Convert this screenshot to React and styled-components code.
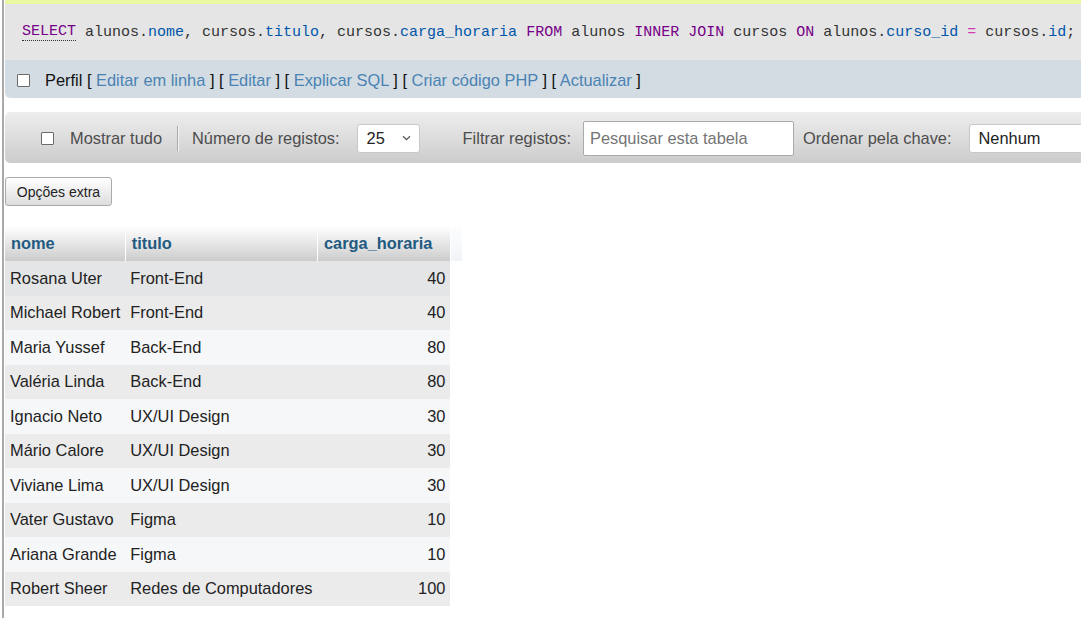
import React from "react"
import styled, { createGlobalStyle } from "styled-components"

const GlobalStyle = createGlobalStyle`
    html, body {
        margin: 0;
        padding: 0;
        background: #fff;
        overflow: hidden;
    }
    body {
        font-family: "Liberation Sans", Arial, sans-serif;
        color: #333;
    }
`

const Frame = styled.div`
    margin-left: 2px;
    border-left: 2px solid #a9a9a9;
    padding-left: 1px;
    min-height: 100vh;
`

const Content = styled.div`
    width: 1120px;
`

const SuccessEdge = styled.div`
    height: 4px;
    background: #ebf8a4;
`

const SqlBox = styled.div`
    height: 56px;
    background: #e5e5e5;
    display: flex;
    align-items: center;
    padding-left: 17px;
    font-family: "Liberation Mono", "DejaVu Sans Mono", monospace;
    font-size: 15px;
    color: #333;
    white-space: pre;
`

const Keyword = styled.span`
    color: #770088;
    border-bottom: ${p => (p.$doc ? "1px dotted #333" : "none")};
`

const Column = styled.span`
    color: #0055aa;
`

const Operator = styled.span`
    color: #d13bb4;
`

const ToolsBar = styled.div`
    height: 38px;
    background: #d3dce3;
    border-radius: 0 0 5px 5px;
    display: flex;
    align-items: center;
    padding-left: 12px;
    padding-top: 2px;
    box-sizing: border-box;
    font-size: 16.4px;
    color: #111;
`

const Checkbox = styled.span`
    display: inline-block;
    width: 11px;
    height: 11px;
    border: 1.5px solid #6b6b6b;
    border-radius: 1px;
    background: #fff;
    flex: none;
`

const ToolsText = styled.span`
    margin-left: 15px;
    white-space: pre;
`

const Link = styled.a`
    color: #4a83b3;
    text-decoration: none;
`

const NavBar = styled.div`
    margin-top: 14px;
    height: 51px;
    box-sizing: border-box;
    padding-top: 1px;
    border-radius: 5px;
    background: linear-gradient(#eeeeee, #cccccc);
    display: flex;
    align-items: center;
    padding-left: 36px;
    font-size: 16.4px;
    color: #4d4d4d;
`

const Label = styled.span`
    margin-left: ${p => p.$gap || 0}px;
    white-space: nowrap;
`

const Separator = styled.span`
    width: 1px;
    height: 25px;
    background: #a9a9a9;
    border-right: 1px solid #f4f4f4;
    margin-left: 15px;
`

const Select = styled.div`
    margin-left: ${p => p.$gap}px;
    width: ${p => p.$width}px;
    height: 29px;
    box-sizing: border-box;
    background: #fff;
    border: 1px solid #c8c8c8;
    border-radius: 3px;
    display: flex;
    align-items: center;
    justify-content: space-between;
    padding: 0 8px 0 9px;
    color: #222;
    flex: none;
`

const Input = styled.div`
    margin-left: 12px;
    width: 211px;
    height: 35px;
    box-sizing: border-box;
    background: #fff;
    border: 1px solid #aaa;
    border-radius: 2px;
    display: flex;
    align-items: center;
    padding-left: 6px;
    color: #757575;
    flex: none;
`

const ExtraButton = styled.button`
    margin-top: 14px;
    height: 29px;
    width: 107px;
    padding: 0;
    font-family: "Liberation Sans", Arial, sans-serif;
    font-size: 14px;
    color: #222;
    background: linear-gradient(#ffffff, #dddddd);
    border: 1px solid #aaa;
    border-radius: 3px;
    display: block;
`

const Table = styled.table`
    margin-top: 20px;
    border-collapse: collapse;
    border-spacing: 0;
    font-size: 16.4px;
`

const Th = styled.th`
    height: 35px;
    padding: 0 5px 0 6px;
    box-sizing: border-box;
    width: ${p => p.$width}px;
    text-align: left;
    font-weight: bold;
    color: #235a81;
    background: ${p => (p.$blank ? "linear-gradient(#fcfdfe, #f1f4f7)" : "linear-gradient(#ffffff, #cccccc)")};
    border-right: ${p => (p.$blank ? "none" : "1px solid #fff")};
`

const Td = styled.td`
    height: 34.5px;
    padding: 0 5px;
    color: #222;
    white-space: nowrap;
    text-align: ${p => (p.$num ? "right" : "left")};
    background: ${p => p.$bg};
`

const Chevron = () => (
    <svg width="9" height="6" viewBox="0 0 9 6">
        <path d="M1 1.2 L4.5 4.6 L8 1.2" fill="none" stroke="#555" strokeWidth="1.2" />
    </svg>
)

const rows = [
    ["Rosana Uter", "Front-End", 40],
    ["Michael Robert", "Front-End", 40],
    ["Maria Yussef", "Back-End", 80],
    ["Valéria Linda", "Back-End", 80],
    ["Ignacio Neto", "UX/UI Design", 30],
    ["Mário Calore", "UX/UI Design", 30],
    ["Viviane Lima", "UX/UI Design", 30],
    ["Vater Gustavo", "Figma", 10],
    ["Ariana Grande", "Figma", 10],
    ["Robert Sheer", "Redes de Computadores", 100],
]

const rowColor = index => {
    if (index === 0) return "#e4e5e6"
    return index % 2 === 1 ? "#ebebec" : "#f6f7f8"
}

// [kind, text]: k = keyword, c = column, o = operator, t = plain
const query = [
    ["doc", "SELECT"], ["t", " alunos."], ["c", "nome"], ["t", ", cursos."], ["c", "titulo"],
    ["t", ", cursos."], ["c", "carga_horaria"], ["t", " "], ["k", "FROM"], ["t", " alunos "],
    ["k", "INNER"], ["t", " "], ["k", "JOIN"], ["t", " cursos "], ["k", "ON"], ["t", " alunos."],
    ["c", "curso_id"], ["t", " "], ["o", "="], ["t", " cursos."], ["c", "id"], ["t", ";"],
]

const renderToken = ([kind, text], index) => {
    if (kind === "doc") return <Keyword key={index} $doc>{text}</Keyword>
    if (kind === "k") return <Keyword key={index}>{text}</Keyword>
    if (kind === "c") return <Column key={index}>{text}</Column>
    if (kind === "o") return <Operator key={index}>{text}</Operator>
    return <span key={index}>{text}</span>
}

const App = () => {
    return (
        <Frame>
            <GlobalStyle />
            <Content>
                <SuccessEdge />
                <SqlBox>{query.map(renderToken)}</SqlBox>
                <ToolsBar>
                    <Checkbox />
                    <ToolsText>
                        {"Perfil [ "}<Link>Editar em linha</Link>{" ] [ "}<Link>Editar</Link>{" ] [ "}
                        <Link>Explicar SQL</Link>{" ] [ "}<Link>Criar código PHP</Link>{" ] [ "}
                        <Link>Actualizar</Link>{" ]"}
                    </ToolsText>
                </ToolsBar>
                <NavBar>
                    <Checkbox />
                    <Label $gap={16}>Mostrar tudo</Label>
                    <Separator />
                    <Label $gap={13}>Número de registos:</Label>
                    <Select $gap={17} $width={63}>
                        <span>25</span>
                        <Chevron />
                    </Select>
                    <Label $gap={43}>Filtrar registos:</Label>
                    <Input>Pesquisar esta tabela</Input>
                    <Label $gap={9}>Ordenar pela chave:</Label>
                    <Select $gap={17} $width={140}>
                        <span>Nenhum</span>
                    </Select>
                </NavBar>
                <ExtraButton>Opções extra</ExtraButton>
                <Table>
                    <thead>
                        <tr>
                            <Th $width={120}>nome</Th>
                            <Th $width={192}>titulo</Th>
                            <Th $width={133}>carga_horaria</Th>
                            <Th $width={11} $blank />
                        </tr>
                    </thead>
                    <tbody>
                        {rows.map((row, index) => (
                            <tr key={row[0]}>
                                <Td $bg={rowColor(index)}>{row[0]}</Td>
                                <Td $bg={rowColor(index)}>{row[1]}</Td>
                                <Td $bg={rowColor(index)} $num>{row[2]}</Td>
                            </tr>
                        ))}
                    </tbody>
                </Table>
            </Content>
        </Frame>
    )
}

export default App
